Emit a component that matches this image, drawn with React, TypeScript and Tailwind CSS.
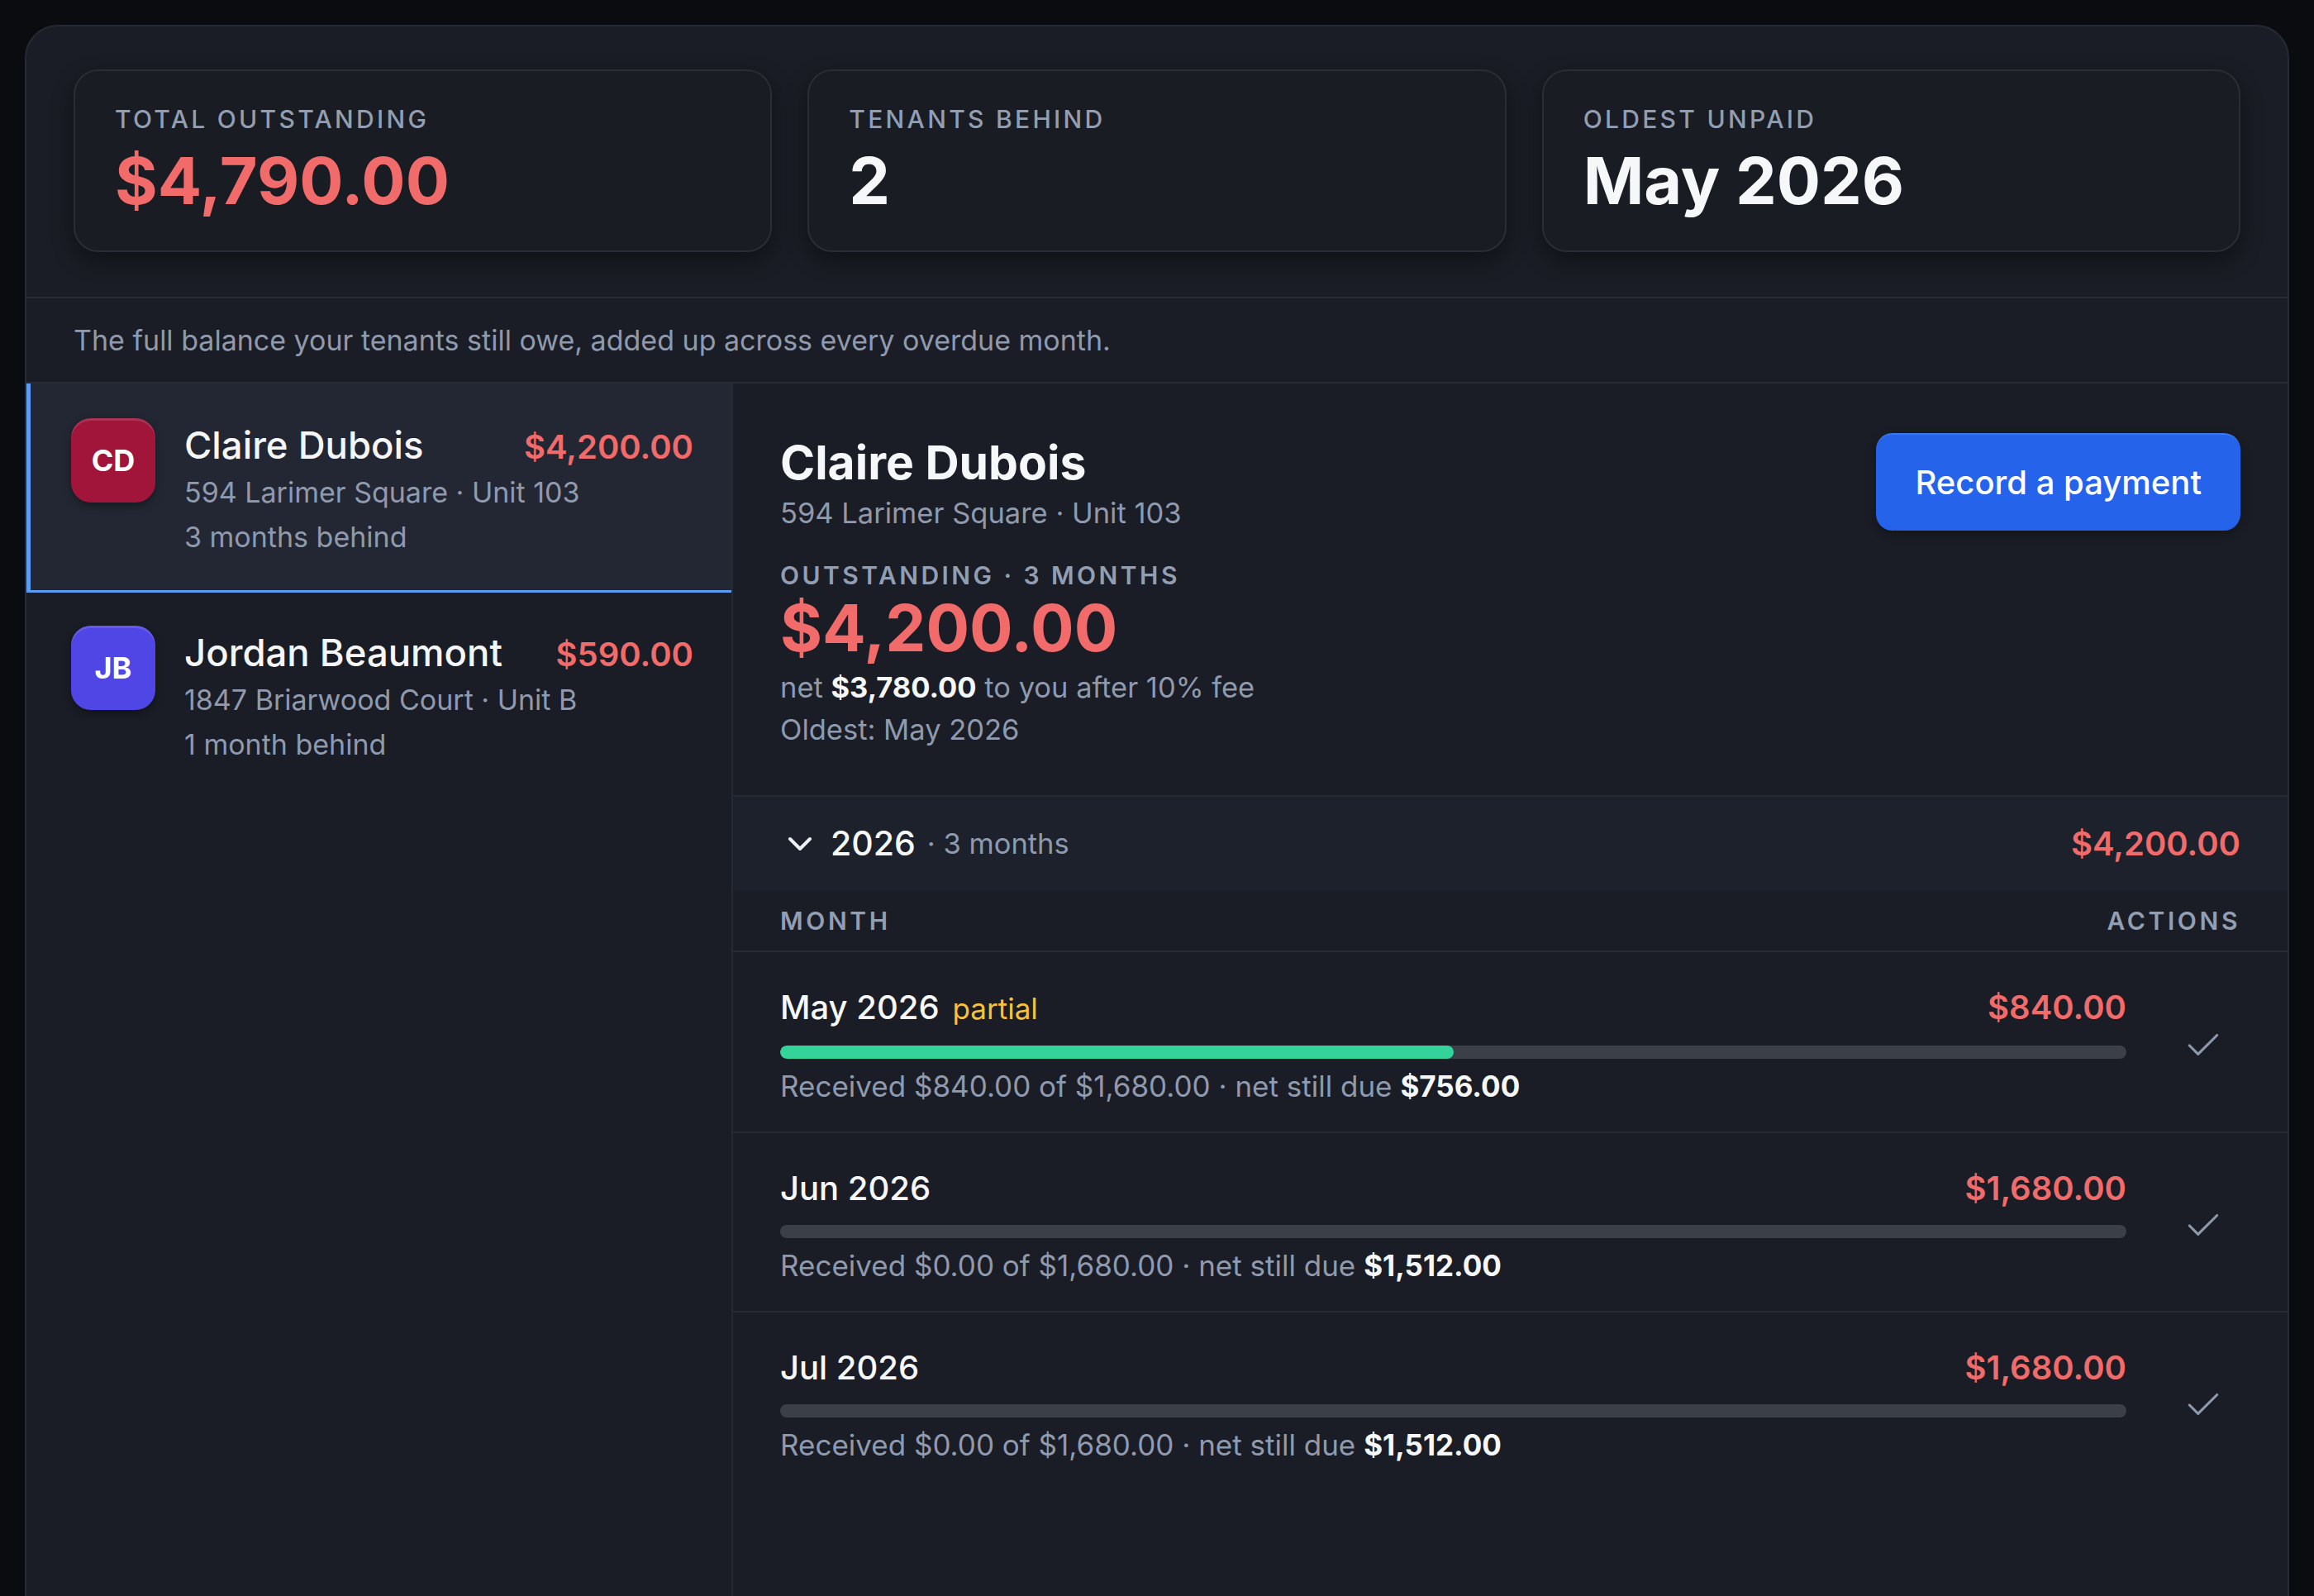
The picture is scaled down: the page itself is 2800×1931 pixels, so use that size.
import React from "react";
import { Check, ChevronDown } from "lucide-react";

const stats = [
  { label: "TOTAL OUTSTANDING", value: "$4,790.00", red: true },
  { label: "TENANTS BEHIND", value: "2", red: false },
  { label: "OLDEST UNPAID", value: "May 2026", red: false },
];

const tenants = [
  {
    initials: "CD",
    name: "Claire Dubois",
    amount: "$4,200.00",
    address: "594 Larimer Square · Unit 103",
    behind: "3 months behind",
    selected: true,
    color: "bg-[#a1153b]",
  },
  {
    initials: "JB",
    name: "Jordan Beaumont",
    amount: "$590.00",
    address: "1847 Briarwood Court · Unit B",
    behind: "1 month behind",
    selected: false,
    color: "bg-[#4f46e5]",
  },
];

const months = [
  { name: "May 2026", partial: true, amount: "$840.00", pct: 50, received: "$840.00", due: "$756.00" },
  { name: "Jun 2026", partial: false, amount: "$1,680.00", pct: 0, received: "$0.00", due: "$1,512.00" },
  { name: "Jul 2026", partial: false, amount: "$1,680.00", pct: 0, received: "$0.00", due: "$1,512.00" },
];

export default function App() {
  return (
    <div className="h-[1931px] overflow-hidden bg-[#0a0c10] px-[30px] pt-[30px] font-['Inter',sans-serif] text-[#f3f5f8]">
      <div className="flex h-[1960px] flex-col rounded-t-[40px] border-2 border-[#262a33] bg-[#1a1d25]">
        {/* stats */}
        <div className="grid grid-cols-3 gap-[43px] border-b-2 border-[#262a33] px-[57px] pb-[54px] pt-[52px]">
          {stats.map((s) => (
            <div
              key={s.label}
              className="rounded-[30px] border-2 border-[#292d36] bg-[#191c23] pb-[41px] pl-[48px] pt-[40px] shadow-[0_10px_26px_rgba(0,0,0,0.4)]"
            >
              <div className="text-[30px] font-medium leading-[36px] tracking-[0.11em] text-[#929eb2]">{s.label}</div>
              <div
                className={`mt-[12px] text-[79px] font-bold leading-[88px] ${s.red ? "text-[#f26b6b]" : "text-[#f6f7f9]"}`}
              >
                {s.value}
              </div>
            </div>
          ))}
        </div>

        {/* description */}
        <div className="flex h-[103px] items-center border-b-2 border-[#262a33] px-[57px] text-[34px] text-[#8f9aae]">
          The full balance your tenants still owe, added up across every overdue month.
        </div>

        {/* lower */}
        <div className="flex flex-1">
          {/* tenant list */}
          <div className="w-[855px] shrink-0 border-r-2 border-[#262a33]">
            {tenants.map((t) => (
              <div
                key={t.name}
                className={`flex items-start gap-[35px] border-l-[5px] pl-[49px] pr-[46px] ${
                  t.selected
                    ? "border-b-[3px] border-l-[#5b9cf5] border-b-[#5b9cf5] bg-[#222733] pb-[37px] pt-[42px]"
                    : "border-l-transparent pb-[37px] pt-[40px]"
                }`}
              >
                <div
                  className={`flex h-[102px] w-[102px] shrink-0 items-center justify-center rounded-[24px] ${t.color} text-[36px] font-bold text-white shadow-[inset_0_3px_0_rgba(255,255,255,0.12),0_4px_10px_rgba(0,0,0,0.35)]`}
                >
                  {t.initials}
                </div>
                <div className="mt-[5px] min-w-0 flex-1">
                  <div className="flex items-baseline justify-between">
                    <span className="text-[45.5px] font-medium leading-[56px] text-[#f5f6f8]">{t.name}</span>
                    <span className="text-[40px] font-semibold leading-[56px] text-[#f26b6b]">{t.amount}</span>
                  </div>
                  <div className="text-[34px] leading-[54px] text-[#8f9aae]">{t.address}</div>
                  <div className="text-[34px] leading-[54px] text-[#8f9aae]">{t.behind}</div>
                </div>
              </div>
            ))}
          </div>

          {/* detail */}
          <div className="min-w-0 flex-1">
            <div className="flex items-start justify-between border-b-2 border-[#262a33] px-[57px] pb-[53px] pt-[60px]">
              <div>
                <div className="text-[57px] font-bold leading-[72px] text-[#f6f7f9]">Claire Dubois</div>
                <div className="text-[34.5px] leading-[50px] text-[#8f9aae]">594 Larimer Square · Unit 103</div>
                <div className="mt-[30px] text-[30px] font-semibold leading-[40px] tracking-[0.115em] text-[#929eb2]">
                  OUTSTANDING · 3 MONTHS
                </div>
                <div className="mt-[3px] text-[78px] font-bold leading-[82px] text-[#f26b6b]">$4,200.00</div>
                <div className="mt-[6px] text-[34.5px] leading-[50px] text-[#8f9aae]">
                  net <span className="font-bold text-[#f6f7f9]">$3,780.00</span> to you after 10% fee
                </div>
                <div className="text-[34.5px] leading-[52px] text-[#8f9aae]">Oldest: May 2026</div>
              </div>
              <button className="h-[118px] rounded-[20px] border-t-2 border-[#3a78f0] bg-[#2563eb] px-[47px] text-[40px] font-medium text-white shadow-[0_4px_12px_rgba(0,0,0,0.3)]">
                Record a payment
              </button>
            </div>

            {/* year row */}
            <div className="flex h-[114px] items-center justify-between bg-[#1d212b] px-[57px]">
              <div className="flex items-center">
                <ChevronDown size={48} strokeWidth={2} className="text-[#eef1f5]" />
                <span className="ml-[13px] text-[41px] font-medium text-[#f6f7f9]">2026</span>
                <span className="ml-[14px] text-[34.5px] text-[#8f9aae]">· 3 months</span>
              </div>
              <span className="text-[40px] font-semibold text-[#f26b6b]">$4,200.00</span>
            </div>

            {/* header */}
            <div className="flex h-[74px] items-center justify-between border-b-2 border-[#262a33] px-[57px] text-[30px] font-semibold tracking-[0.12em] text-[#929eb2]">
              <span>MONTH</span>
              <span>ACTIONS</span>
            </div>

            {months.map((m) => (
              <div
                key={m.name}
                className="flex items-center gap-[48px] border-b-2 border-[#262a33] pb-[31px] pl-[57px] pr-[57px] pt-[41px] last:border-b-0"
              >
                <div className="min-w-0 flex-1">
                  <div className="flex items-baseline justify-between">
                    <div className="flex items-baseline">
                      <span className="text-[40px] font-medium leading-[52px] text-[#f6f7f9]">{m.name}</span>
                      {m.partial && <span className="ml-[16px] text-[35px] text-[#f6c23a]">partial</span>}
                    </div>
                    <span className="text-[40px] font-semibold leading-[52px] text-[#f26b6b]">{m.amount}</span>
                  </div>
                  <div className="mt-[18px] h-[16px] w-full overflow-hidden rounded-full bg-[#3a3f48]">
                    <div className="h-full rounded-full bg-[#34d399]" style={{ width: `${m.pct}%` }} />
                  </div>
                  <div className="mt-[9px] text-[35px] leading-[48px] text-[#8f9aae]">
                    Received {m.received} of $1,680.00 · net still due{" "}
                    <span className="font-bold text-[#f6f7f9]">{m.due}</span>
                  </div>
                </div>
                <div className="flex w-[90px] shrink-0 justify-center">
                  <Check size={50} strokeWidth={1.5} className="text-[#8d99ad]" />
                </div>
              </div>
            ))}
          </div>
        </div>
      </div>
    </div>
  );
}
